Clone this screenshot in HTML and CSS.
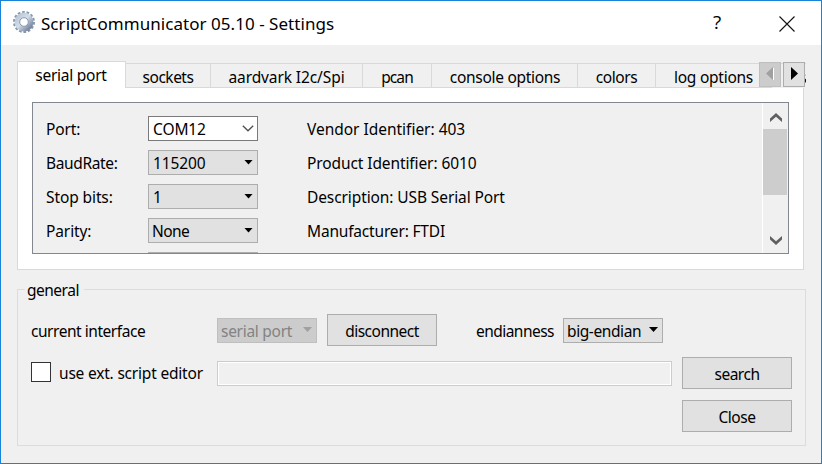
FILE: index.html
```html
<!DOCTYPE html>
<html lang="en">
<head>
<meta charset="utf-8">
<title>ScriptCommunicator 05.10 - Settings</title>
<link rel="stylesheet" href="styles.css">
</head>
<body>
<div class="window">
  <header class="titlebar">
    <svg class="gear" width="24" height="24" viewBox="0 0 24 24">
      <defs><linearGradient id="steel" x1="0" y1="0" x2="1" y2="1"><stop offset="0" stop-color="#b9c6d6"/><stop offset=".45" stop-color="#d4deea"/><stop offset="1" stop-color="#6d7c98"/></linearGradient></defs>
      <circle cx="12" cy="12" r="9.9" fill="none" stroke="#8796ac" stroke-width="2.2" stroke-dasharray="2.7 1.743"/>
      <circle cx="12" cy="12" r="6.9" fill="none" stroke="url(#steel)" stroke-width="5"/>
      <circle cx="12" cy="12" r="4.3" fill="#fff" stroke="#8695ad" stroke-width="1"/>
    </svg>
    <h1 class="title">ScriptCommunicator 05.10 - Settings</h1>
    <span class="help">?</span>
    <svg class="close" width="16" height="16" viewBox="0 0 16 16"><path d="M.5 .5l15 15M15.500 .5l-15 15" stroke="#111" stroke-width="1.100" fill="none"/></svg>
  </header>
  <main class="content">
    <div class="tabarea">
      <nav class="tabs">
        <span class="tab active">serial port</span>
        <span class="tab sockets">sockets</span>
        <span class="tab aardvark">aardvark I2c/Spi</span>
        <span class="tab pcan">pcan</span>
        <span class="tab console">console options</span>
        <span class="tab colors">colors</span>
        <span class="tab log">log options</span>
        <span class="tab cut">a</span>
      </nav>
      <div class="scrollers">
        <span class="scroller off"><svg width="8" height="14" viewBox="0 0 8 14"><path d="M7.500 1v12" stroke="#fff"/><path d="M7 0v13L0 6.500z" fill="#a0a0a0"/></svg></span>
        <span class="scroller"><svg width="7" height="14" viewBox="0 0 7 14"><path d="M0 0l7 6.500L0 13z"/></svg></span>
      </div>
    </div>
    <section class="pane">
      <div class="frame">
        <div class="form">
          <span class="label">Port:</span><span class="combo edit"><span>COM12</span><svg width="12" height="7" viewBox="0 0 12 7"><path d="M.8 .8L6 5.800 11.200 .8" fill="none" stroke="#505050" stroke-width="1.300"/></svg></span><span class="info vendor">Vendor Identifier: 403</span>
          <span class="label baud">BaudRate:</span><span class="combo"><span>115200</span><i class="arrow"></i></span><span class="info">Product Identifier: 6010</span>
          <span class="label">Stop bits:</span><span class="combo"><span>1</span><i class="arrow"></i></span><span class="info">Description: USB Serial Port</span>
          <span class="label">Parity:</span><span class="combo parity"><span>None</span><i class="arrow"></i></span><span class="info maker">Manufacturer: FTDI</span>
          <span></span><span class="combo"></span><span></span>
        </div>
        <div class="scrollbar">
          <svg class="up" width="12" height="10" viewBox="0 0 12 10"><path d="M0 5.500L6 0l6 5.500V9L6 3.800 0 9z" fill="#606060"/></svg>
          <div class="thumb"></div>
          <svg class="down" width="12" height="10" viewBox="0 0 12 10"><path d="M0 0l6 5.200L12 0v3.500L6 9 0 3.500z" fill="#606060"/></svg>
        </div>
      </div>
    </section>
    <fieldset class="general">
      <legend>general</legend>
      <div class="row first">
        <span class="caption">current interface</span>
        <span class="combo disabled"><span>serial port</span><i class="arrow"></i></span>
        <span class="button disconnect">disconnect</span>
        <span class="endianness">endianness</span>
        <span class="combo endian"><span>big-endian</span><i class="arrow"></i></span>
      </div>
      <div class="row second">
        <span class="check"><i class="box"></i><span>use ext. script editor</span></span>
        <span class="field"></span>
        <span class="button search">search</span>
      </div>
      <div class="row third"><span class="button closebtn">Close</span></div>
    </fieldset>
  </main>
</div>
</body>
</html>
```
FILE: styles.css
```css
* { box-sizing: border-box; }
body { margin: 0; font: 15.5px/20px "Noto Sans", sans-serif; color: #000; letter-spacing: -0.1px; }
svg { display: block; flex: none; }
.window { width: 822px; height: 464px; border: 1px solid #1883d7; background: #f0f0f0; overflow: hidden; white-space: nowrap; }
.titlebar { height: 44px; background: #fff; display: flex; align-items: center; padding: 0 26px 0 11px; }
.gear { margin-top: -2px; }
.title { margin: 2px 0 0 5px; font: 17px/24px "Noto Sans", sans-serif; letter-spacing: 0.04px; flex: 1; }
.help { font: 19px/24px "Open Sans", sans-serif; width: 9px; margin: -2px 57px 0 0; }
.close { margin-top: 1px; }
.content { padding: 16px 15px 0 16px; }
.tabarea { display: flex; height: 27px; position: relative; }
.tabs { display: flex; align-items: flex-end; width: 789px; overflow: hidden; }
.tab { flex: none; height: 25px; border: 1px solid #d9d9d9; border-left: 0; display: flex; align-items: center; justify-content: center; padding-top: 3px; }
.tab.active { width: 109px; height: 27px; background: #fff; border: 1px solid #d9d9d9; border-bottom: 0; padding: 0 1px 0 0; letter-spacing: -0.25px; }
.sockets { width: 85px; letter-spacing: -0.5px; }
.aardvark { width: 152px; }
.pcan { width: 69px; letter-spacing: -0.9px; }
.console { width: 146px; padding-left: 1px; letter-spacing: -0.3px; }
.colors { width: 78px; letter-spacing: -0.4px; }
.log { width: 116px; letter-spacing: -0.25px; }
.cut { width: 70px; justify-content: flex-start; padding-left: 32px; border-bottom-color: transparent; }
.scrollers { position: absolute; left: 742px; top: 1px; display: flex; gap: 2px; }
.scroller { width: 22px; height: 25px; border: 1px solid #adadad; background: #e1e1e1; display: flex; align-items: center; justify-content: center; padding-bottom: 1px; }
.scroller.off { background: #ccc; border-color: #bfbfbf; }
.pane { width: 787px; height: 182px; background: #fff; border: 1px solid #d9d9d9; border-top: 0; padding: 14px; }
.frame { width: 757px; height: 152px; border: 1px solid #828790; background: #f0f0f0; display: flex; overflow: hidden; }
.form { flex: 1; display: grid; grid-template-columns: 102px 159px 1fr; grid-auto-rows: 25px; row-gap: 9px; padding: 13px 0 0 13px; align-items: center; height: 200px; }
.label, .info { padding-top: 1px; }
.baud { letter-spacing: -0.35px; }
.vendor { letter-spacing: -0.02px; }
.maker { letter-spacing: -0.18px; }
.combo { width: 110px; height: 25px; border: 1px solid #adadad; background: #e1e1e1; display: flex; align-items: center; justify-content: space-between; padding: 1px 4px 0 4px; flex: none; }
.combo.edit { background: #fff; border-color: #7a7a7a; padding: 0 3px 0 4px; }
.parity { letter-spacing: -0.6px; padding-left: 3px; }
.arrow { width: 9px; height: 5px; background: #000; clip-path: polygon(0 0, 100% 0, 50% 100%); margin-top: -2px; }
.scrollbar { width: 26px; height: 150px; border-left: 1px solid #fff; display: flex; flex-direction: column; align-items: center; }
.up { margin: 10px 0 6px; }
.thumb { width: 24px; height: 66px; background: #cdcdcd; align-self: flex-start; }
.down { margin-top: 41px; }
.general { margin: 10px 0 0; width: 789px; height: 166px; border: 1px solid #dcdcdc; padding: 0; }
.general legend { margin-left: 7px; padding: 0 3px 0 2px; height: 19px; line-height: 20px; letter-spacing: -0.5px; width: 59px; }
.row { display: flex; align-items: center; padding-left: 13px; }
.first { height: 32px; margin-top: 15px; }
.caption { width: 186px; letter-spacing: -0.46px; padding-top: 1px; }
.combo.disabled { width: 100px; background: #ccc; border-color: #bfbfbf; color: #838383; padding-left: 3px; letter-spacing: -0.28px; }
.disabled .arrow { background: #a0a0a0; }
.button { width: 110px; height: 32px; border: 1px solid #adadad; background: #e1e1e1; display: flex; align-items: center; justify-content: center; padding-top: 2px; flex: none; letter-spacing: -0.5px; }
.disconnect { margin-left: 10px; }
.endianness { margin-left: 39px; width: 87px; letter-spacing: -0.54px; padding-top: 1px; }
.endian { width: 100px; padding-left: 3px; letter-spacing: -0.4px; }
.second { height: 32px; margin-top: 11px; }
.check { width: 186px; display: flex; align-items: center; gap: 8px; letter-spacing: -0.2px; }
.box { width: 20px; height: 20px; border: 1px solid #333; background: #fff; margin-top: -2px; }
.field { width: 455px; height: 25px; border: 1px solid #ccc; box-shadow: inset 0 0 0 1px #fff; }
.search { margin-left: 10px; }
.third { margin-top: 11px; justify-content: flex-end; padding-right: 13px; }
```
